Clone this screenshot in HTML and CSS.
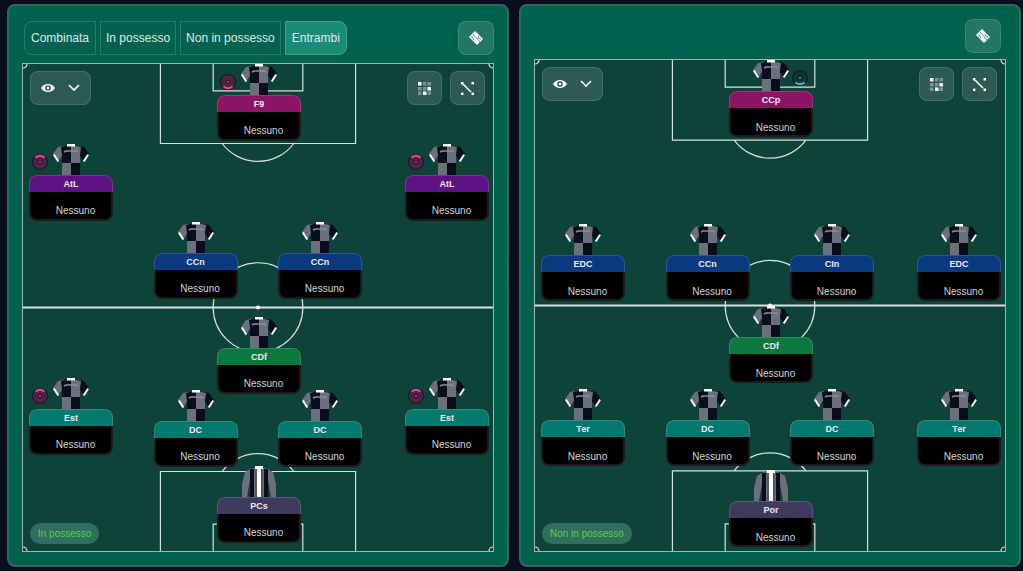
FILE: index.html
```html
<!DOCTYPE html>
<html lang="it">
<head>
  <meta charset="UTF-8" />
  <meta name="viewport" content="width=device-width, initial-scale=1.0" />
  <title>Tattica</title>
  <link rel="stylesheet" href="styles.css">
</head>
<body>
  <svg class="defs" aria-hidden="true">
    <symbol id="shirt" viewBox="0 0 36 31">
      <path fill="#6c6f7c" d="M10 2 5 3 0 10 5 18 10 10z" />
      <path fill="#0a0d1e" d="M26 2l5 1 5 7-5 8-5-8z" />
      <path fill="#0a0d1e" d="M8 3l6-1h4v17H9V11z" />
      <path fill="#6c6f7c" d="M18 2h4l6 1-1 8v8h-9z" />
      <path fill="#6c6f7c" d="M9 19h9v12H9z" />
      <path fill="#0a0d1e" d="M18 19h9v12h-9z" />
      <path stroke="#fff" stroke-width="2" d="M.8 10.500l4.500 7M35.200 10.500l-4.500 7" />
      <path fill="#fff" d="M14 0h8v2.500h-8z" />
      <path fill="none" stroke="#8b8d96" stroke-width="1.500" d="M11 8l2-1h10l2 1" />
    </symbol>
    <symbol id="keeper" viewBox="0 0 36 31">
      <path fill="#6c6f7c" d="M9 3 4 6 1 18v13h5l3-17zM27 3l5 3 3 12v13h-5l-3-17z" />
      <path fill="#6c6f7c" d="M8 3l6-1h8l6 1-1 8v20H9V11z" />
      <path fill="#0a0d1e" d="M9 3h4v28H9zM23 3h4v28h-4z" />
      <path fill="#0a0d1e" fill-opacity=".5" d="M14.500 3h1v28h-1zM20.500 3h1v28h-1z" />
      <path fill="#fff" d="M14 0h8v3h-2v28h-4V3h-2z" />
    </symbol>
    <symbol id="duty" viewBox="0 0 16 16">
      <circle cx="8" cy="8" r="8" fill="#1d1528" />
      <circle cx="8" cy="8" r="4.500" fill="none" stroke="currentColor" stroke-opacity=".25" stroke-width="5" />
      <circle cx="8" cy="8" r="1" fill="currentColor" />
      <path fill="none" stroke="currentColor" stroke-width="2" d="M3.500 3.500Q8 0 12.500 3.500" />
    </symbol>
    <symbol id="duty-support" viewBox="0 0 16 16">
      <circle cx="8" cy="8" r="8" fill="#0b1f28" />
      <circle cx="8" cy="8" r="4.500" fill="none" stroke="currentColor" stroke-opacity=".12" stroke-width="5" />
      <circle cx="8" cy="8" r="1" fill="currentColor" />
      <path fill="none" stroke="currentColor" stroke-width="2" d="M3.500 3.500Q8 0 12.500 3.500" />
    </symbol>
    <symbol id="eye" viewBox="0 0 14 8">
      <path fill="#fff" fill-rule="evenodd" d="M0 4C3-1.300 11-1.300 14 4 11 9.300 3 9.300 0 4zM7 1.200a2.800 2.800 0 1 0 0 5.600 2.800 2.800 0 0 0 0-5.600z" />
      <circle cx="7" cy="4" r="1.300" fill="#fff" />
    </symbol>
    <symbol id="chevron" viewBox="0 0 12 8">
      <path fill="none" stroke="#fff" stroke-width="1.600" d="M1 1l5 5 5-5" />
    </symbol>
    <symbol id="grid" viewBox="0 0 13 13">
      <path fill="#fff" fill-opacity=".35" d="M5 0h3.500v3.500H5zM9.500 0H13v3.500H9.500zM0 5h3.500v3.500H0zM5 5h3.500v3.500H5zM0 9.500h3.500V13H0zM9.500 9.500H13V13H9.500z" />
      <path fill="#fff" d="M0 0h3.500v3.500H0zM9.500 5H13v3.500H9.500zM5 9.500h3.500V13H5z" />
    </symbol>
    <symbol id="lines" viewBox="0 0 13 13">
      <path fill="#fff" d="M0 0h3L0 3zM10.500 0H13v2.500h-2.500zM0 10.500h2.500V13H0zM10.500 10.500H13V13h-2.500z" />
      <path stroke="#fff" stroke-width="1.500" d="M1 1l9 9" />
    </symbol>
    <symbol id="field" viewBox="0 0 14 14">
      <path fill="#fff" d="M6 0 14 8 8 14 0 6z" />
      <path fill="none" stroke="#23705f" stroke-width=".8" d="M4 3l7 8M2 6l2 .5.500 2.500M12 8l-2-.5L9 5" />
    </symbol>
    <symbol id="markings" viewBox="0 0 472 490" preserveAspectRatio="none">
      <g fill="none" stroke="#d5e2de" stroke-width="1.200">
        <path d="M138 0v80h196V0M191 0v27h90V0M200 80a45 45 0 0 0 72 0" />
        <path d="M138 490v-80h196v80M191 490v-27h90v27M200 410a45 45 0 0 1 72 0" />
        <circle cx="236" cy="245" r="45" />
        <path d="M0 4a4 4 0 0 0 4-4M468 0a4 4 0 0 0 4 4M0 486a4 4 0 0 1 4 4M468 490a4 4 0 0 1 4-4" />
        <path stroke-width="2" d="M0 245h472" />
      </g>
      <circle cx="236" cy="245" r="2" fill="#fff" />
    </symbol>
  </svg>

  <main class="panels">
    <section class="panel">
      <header class="panel-header">
        <nav class="tabs">
          <button type="button">Combinata</button>
          <button type="button">In possesso</button>
          <button type="button">Non in possesso</button>
          <button type="button" class="active">Entrambi</button>
        </nav>
        <button type="button" class="icon-btn" aria-label="Campo"><svg width="14" height="14"><use href="#field" /></svg></button>
      </header>

      <div class="pitch in">
        <svg class="markings" aria-hidden="true"><use href="#markings" /></svg>
        <div class="controls">
          <button type="button" class="icon-btn view" aria-label="Visualizza">
            <svg width="14" height="8"><use href="#eye" /></svg>
            <svg width="12" height="8"><use href="#chevron" /></svg>
          </button>
          <button type="button" class="icon-btn" aria-label="Griglia"><svg width="13" height="13"><use href="#grid" /></svg></button>
          <button type="button" class="icon-btn" aria-label="Linee"><svg width="13" height="13"><use href="#lines" /></svg></button>
        </div>

        <div class="player striker center forward">
          <svg class="duty low"><use href="#duty" /></svg>
          <svg class="shirt"><use href="#shirt" /></svg>
          <div class="card"><b>F9</b><span>Nessuno</span></div>
        </div>
        <div class="player wing left winger">
          <svg class="duty"><use href="#duty" /></svg>
          <svg class="shirt"><use href="#shirt" /></svg>
          <div class="card"><b>AtL</b><span>Nessuno</span></div>
        </div>
        <div class="player wing right winger">
          <svg class="duty"><use href="#duty" /></svg>
          <svg class="shirt"><use href="#shirt" /></svg>
          <div class="card"><b>AtL</b><span>Nessuno</span></div>
        </div>
        <div class="player mid mid-left midfielder">
          <svg class="shirt"><use href="#shirt" /></svg>
          <div class="card"><b>CCn</b><span>Nessuno</span></div>
        </div>
        <div class="player mid mid-right midfielder">
          <svg class="shirt"><use href="#shirt" /></svg>
          <div class="card"><b>CCn</b><span>Nessuno</span></div>
        </div>
        <div class="player anchor center holding">
          <svg class="shirt"><use href="#shirt" /></svg>
          <div class="card"><b>CDf</b><span>Nessuno</span></div>
        </div>
        <div class="player full left defender">
          <svg class="duty"><use href="#duty" /></svg>
          <svg class="shirt"><use href="#shirt" /></svg>
          <div class="card"><b>Est</b><span>Nessuno</span></div>
        </div>
        <div class="player full right defender">
          <svg class="duty"><use href="#duty" /></svg>
          <svg class="shirt"><use href="#shirt" /></svg>
          <div class="card"><b>Est</b><span>Nessuno</span></div>
        </div>
        <div class="player back mid-left defender">
          <svg class="shirt"><use href="#shirt" /></svg>
          <div class="card"><b>DC</b><span>Nessuno</span></div>
        </div>
        <div class="player back mid-right defender">
          <svg class="shirt"><use href="#shirt" /></svg>
          <div class="card"><b>DC</b><span>Nessuno</span></div>
        </div>
        <div class="player goal center goalkeeper">
          <svg class="shirt"><use href="#keeper" /></svg>
          <div class="card"><b>PCs</b><span>Nessuno</span></div>
        </div>

        <div class="phase">In possesso</div>
      </div>
    </section>

    <section class="panel">
      <header class="panel-header compact">
        <button type="button" class="icon-btn" aria-label="Campo"><svg width="14" height="14"><use href="#field" /></svg></button>
      </header>

      <div class="pitch out">
        <svg class="markings" aria-hidden="true"><use href="#markings" /></svg>
        <div class="controls">
          <button type="button" class="icon-btn view" aria-label="Visualizza">
            <svg width="14" height="8"><use href="#eye" /></svg>
            <svg width="12" height="8"><use href="#chevron" /></svg>
          </button>
          <button type="button" class="icon-btn" aria-label="Griglia"><svg width="13" height="13"><use href="#grid" /></svg></button>
          <button type="button" class="icon-btn" aria-label="Linee"><svg width="13" height="13"><use href="#lines" /></svg></button>
        </div>

        <div class="player striker center forward">
          <svg class="duty low support"><use href="#duty-support" /></svg>
          <svg class="shirt"><use href="#shirt" /></svg>
          <div class="card"><b>CCp</b><span>Nessuno</span></div>
        </div>
        <div class="player mid left midfielder">
          <svg class="shirt"><use href="#shirt" /></svg>
          <div class="card"><b>EDC</b><span>Nessuno</span></div>
        </div>
        <div class="player mid mid-left midfielder">
          <svg class="shirt"><use href="#shirt" /></svg>
          <div class="card"><b>CCn</b><span>Nessuno</span></div>
        </div>
        <div class="player mid mid-right midfielder">
          <svg class="shirt"><use href="#shirt" /></svg>
          <div class="card"><b>CIn</b><span>Nessuno</span></div>
        </div>
        <div class="player mid right midfielder">
          <svg class="shirt"><use href="#shirt" /></svg>
          <div class="card"><b>EDC</b><span>Nessuno</span></div>
        </div>
        <div class="player anchor center holding">
          <svg class="shirt"><use href="#shirt" /></svg>
          <div class="card"><b>CDf</b><span>Nessuno</span></div>
        </div>
        <div class="player back left defender">
          <svg class="shirt"><use href="#shirt" /></svg>
          <div class="card"><b>Ter</b><span>Nessuno</span></div>
        </div>
        <div class="player back mid-left defender">
          <svg class="shirt"><use href="#shirt" /></svg>
          <div class="card"><b>DC</b><span>Nessuno</span></div>
        </div>
        <div class="player back mid-right defender">
          <svg class="shirt"><use href="#shirt" /></svg>
          <div class="card"><b>DC</b><span>Nessuno</span></div>
        </div>
        <div class="player back right defender">
          <svg class="shirt"><use href="#shirt" /></svg>
          <div class="card"><b>Ter</b><span>Nessuno</span></div>
        </div>
        <div class="player goal center goalkeeper">
          <svg class="shirt"><use href="#keeper" /></svg>
          <div class="card"><b>Por</b><span>Nessuno</span></div>
        </div>

        <div class="phase">Non in possesso</div>
      </div>
    </section>
  </main>
</body>
</html>
```
FILE: styles.css
```css
*, *::before, *::after {
  margin: 0;
  padding: 0;
  box-sizing: border-box;
}

body {
  font-family: "Liberation Sans", Arial, sans-serif;
  font-size: 12px;
  color: #dcebe6;
  background: #0a0d1e;
}

button {
  font: inherit;
  color: inherit;
  cursor: pointer;
}

.defs {
  position: absolute;
  width: 0;
  height: 0;
}

.panels {
  display: grid;
  grid-template-columns: 1fr 1fr;
  gap: 10px;
  min-height: 100vh;
  padding: 4px 2px 4px 7px;
}

.panel {
  display: flex;
  flex-direction: column;
  padding: 13px;
  border: 2px solid #2b6b57;
  border-radius: 8px;
  background: #02624f;
}

.panel-header {
  display: flex;
  justify-content: space-between;
  align-items: center;
  padding: 2px 0 8px 2px;
}

.panel-header.compact {
  justify-content: flex-end;
  padding: 0 5px 6px 0;
}

.tabs {
  display: flex;
  gap: 4px;
}

.tabs button {
  height: 34px;
  padding: 0 5px;
  border: 1px solid #2a7a68;
  background: transparent;
}

.tabs button:first-child {
  padding: 0 6px;
  border-radius: 8px 0 0 8px;
}

.tabs button:last-child {
  border-radius: 0 8px 8px 0;
}

.tabs .active {
  padding: 0 6px;
  background: #198b76;
  border-color: #40a390;
}

.icon-btn {
  display: flex;
  justify-content: center;
  align-items: center;
  width: 36px;
  height: 34px;
  border: 1px solid rgba(255, 255, 255, 0.12);
  border-radius: 8px;
  background: rgba(255, 255, 255, 0.13);
}

/* Pitch */
.pitch {
  position: relative;
  flex: 1;
  min-height: 480px;
  border: 1px solid #9db8b1;
  background: #0e433a;
}

.markings {
  position: absolute;
  inset: 0;
  width: 100%;
  height: 100%;
}

.controls {
  position: relative;
  display: flex;
  gap: 8px;
  padding: 7px 8px 7px 7px;
}

.controls .icon-btn {
  width: 35px;
}

.controls .view {
  width: 61px;
  gap: 13px;
  margin-right: auto;
}

.phase {
  position: absolute;
  left: 7px;
  bottom: 7px;
  padding: 0 8px;
  border-radius: 11px;
  font-size: 10px;
  line-height: 21px;
  color: #55d04a;
  background: #306f5f;
}

/* Players */
.player {
  position: absolute;
  display: flex;
  flex-direction: column;
  align-items: center;
  width: 84px;
  margin-left: -41px;
}

.shirt {
  width: 36px;
  height: 31px;
}

.card {
  width: 100%;
  height: 46px;
  border: 2px solid #1b1b1d;
  border-top: 0;
  border-radius: 8px;
  background: #000;
  text-align: center;
}

.card b {
  display: block;
  margin: 0 -2px;
  border: 1px solid rgba(255, 255, 255, 0.15);
  border-bottom: 0;
  border-radius: 8px 8px 0 0;
  font-size: 9px;
  line-height: 16px;
  color: #f0e8f0;
}

.card span {
  display: block;
  padding: 11px 0 0 9px;
  font-size: 10px;
  line-height: 16px;
  color: #d4d4d4;
}

.out .card span {
  padding-top: 12px;
}

.duty {
  position: absolute;
  top: 10px;
  left: 3px;
  width: 16px;
  height: 16px;
  color: #e64aa0;
}

.duty.low {
  transform: rotate(180deg);
}

.duty.support {
  left: 63px;
  color: #1fd3a6;
}

.forward b { background: #8c1464; }
.winger b { background: #5f1283; }
.midfielder b { background: #093a80; }
.holding b { background: #0b7840; }
.defender b { background: #04796f; }
.goalkeeper b { background: #3f3b5f; }

.left { left: 10%; }
.mid-left { left: 36.5%; }
.center { left: 50%; }
.mid-right { left: 63%; }
.right { left: 90%; }

.in .striker { top: 0; }
.in .wing { top: 16.5%; }
.in .mid { top: 32.5%; }
.in .anchor { top: 52%; }
.in .full { top: 64.5%; }
.in .back { top: 67%; }
.in .goal { top: 82.5%; }

.out .striker { top: 0; }
.out .mid { top: 33.5%; }
.out .anchor { top: 50%; }
.out .back { top: 67%; }
.out .goal { top: 83.5%; }

@media (max-width: 860px) {
  .panels {
    grid-template-columns: 1fr;
  }
}
```
